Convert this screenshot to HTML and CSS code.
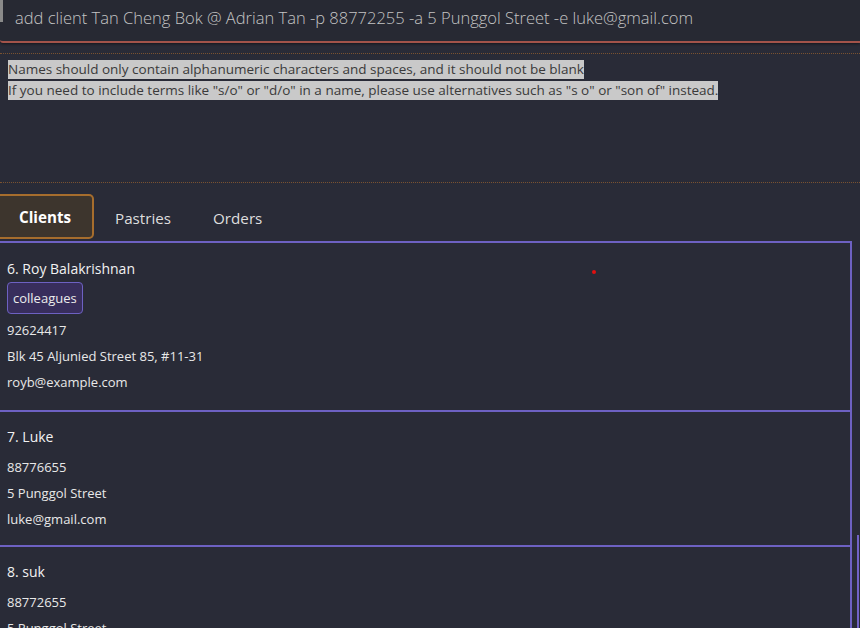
FILE: index.html
```html
<!DOCTYPE html>
<html>
<head>
<meta charset="utf-8">
<link rel="stylesheet" href="styles.css">
</head>
<body>
<div class="app">
  <div class="command">
    <div class="command-edge"></div>
    <span class="command-text">add client Tan Cheng Bok @ Adrian Tan -p 88772255 -a 5 Punggol Street -e luke@gmail.com</span>
  </div>
  <div class="dotted first"></div>
  <div class="result">
    <div class="result-line"><span class="hl">Names should only contain alphanumeric characters and spaces, and it should not be blank</span></div>
    <div class="result-line"><span class="hl">If you need to include terms like "s/o" or "d/o" in a name, please use alternatives such as "s o" or "son of" instead.</span></div>
  </div>
  <div class="dotted second"></div>
  <div class="tabs">
    <div class="tab active">Clients</div>
    <div class="tab">Pastries</div>
    <div class="tab">Orders</div>
  </div>
  <div class="list-wrap">
    <div class="list">
      <div class="card">
        <div class="name">6. Roy Balakrishnan</div>
        <div class="tags"><span class="tag">colleagues</span></div>
        <div class="field">92624417</div>
        <div class="field">Blk 45 Aljunied Street 85, #11-31</div>
        <div class="field">royb@example.com</div>
      </div>
      <div class="card">
        <div class="name">7. Luke</div>
        <div class="field">88776655</div>
        <div class="field">5 Punggol Street</div>
        <div class="field">luke@gmail.com</div>
      </div>
      <div class="card">
        <div class="name">8. suk</div>
        <div class="field">88772655</div>
        <div class="field">5 Punggol Street</div>
      </div>
    </div>
    <div class="scrollbar"></div>
    <div class="dot"></div>
  </div>
</div>
</body>
</html>
```

FILE: styles.css
```css
* { box-sizing: border-box; }
html, body {
  margin: 0;
  padding: 0;
  background: #292b37;
  height: 100%;
  overflow: hidden;
}
.app {
  width: 860px;
  height: 628px;
  display: flex;
  flex-direction: column;
  font-family: "Open Sans", "Noto Sans", sans-serif;
  color: #e6e6e6;
  position: relative;
}
.command {
  height: 43px;
  border-bottom: 2px solid #a3534a;
  border-bottom-left-radius: 3px;
  display: flex;
  align-items: flex-start;
  padding-left: 15px;
  padding-top: 6px;
  position: relative;
  background: #272933;
  box-shadow: 0 1px 3px rgba(0,0,0,0.5);
}
.command-edge {
  position: absolute;
  left: 0;
  top: 0;
  width: 3px;
  height: 22px;
  background: #8a8a8a;
}
.command-text {
  font-size: 16.5px;
  font-weight: 300;
  color: #c4c4c4;
  white-space: nowrap;
}
.dotted {
  border-top: 1px dotted #7a5230;
  height: 0;
}
.dotted.first { margin-top: 10px; }
.result {
  padding: 6px 8px 0;
  height: 128px;
  font-size: 13.5px;
  color: #3a3a3a;
}
.result-line {
  height: 21px;
  line-height: 19px;
}
.hl {
  background: #c9c9c9;
  display: inline-block;
  white-space: nowrap;
}
.tabs {
  display: flex;
  align-items: stretch;
  margin-top: 11px;
  height: 47px;
  padding-bottom: 2px;
  padding-top: 2px;
}
.tab {
  font-size: 15.2px;
  color: #dedede;
  display: flex;
  align-items: center;
  padding: 0 21px;
}
.tab.active {
  background: #3d352d;
  border: 2px solid #a66d2d;
  border-left: none;
  border-radius: 0 5px 5px 0;
  font-weight: 700;
  color: #ffffff;
  padding: 0 21px 0 19px;
  width: 94px;
  margin-top: -2px;
}
.list-wrap {
  flex: 1;
  position: relative;
  display: flex;
  min-height: 0;
}
.list {
  width: 852px;
  border-top: 2px solid #6d61c2;
  border-right: 2px solid #6d61c2;
  display: flex;
  flex-direction: column;
  overflow: hidden;
}
.card {
  border-bottom: 2px solid #6d61c2;
  padding: 15px 7px 16px;
  flex-shrink: 0;
}
.card:first-child {
  padding-top: 16px;
  padding-bottom: 18px;
}
.name {
  font-size: 14px;
  color: #f2f2f2;
  line-height: 20px;
  margin-bottom: 10px;
}
.tags {
  display: flex;
  margin-top: -7px;
  margin-bottom: 6px;
}
.tag {
  background: #382e5c;
  border: 1px solid #6d61c2;
  border-radius: 4px;
  font-size: 13px;
  color: #ececec;
  padding: 5px 5px;
  line-height: 20px;
}
.field {
  font-size: 13px;
  color: #e8e8e8;
  line-height: 20px;
  margin-top: 6px;
  white-space: nowrap;
}
.name + .field { margin-top: 0; }
.scrollbar {
  width: 2px;
  margin-left: 5px;
  margin-top: 294px;
  background: #7163c6;
}
.dot {
  position: absolute;
  left: 592px;
  top: 29px;
  width: 4px;
  height: 4px;
  border-radius: 50%;
  background: #e01010;
}
```
